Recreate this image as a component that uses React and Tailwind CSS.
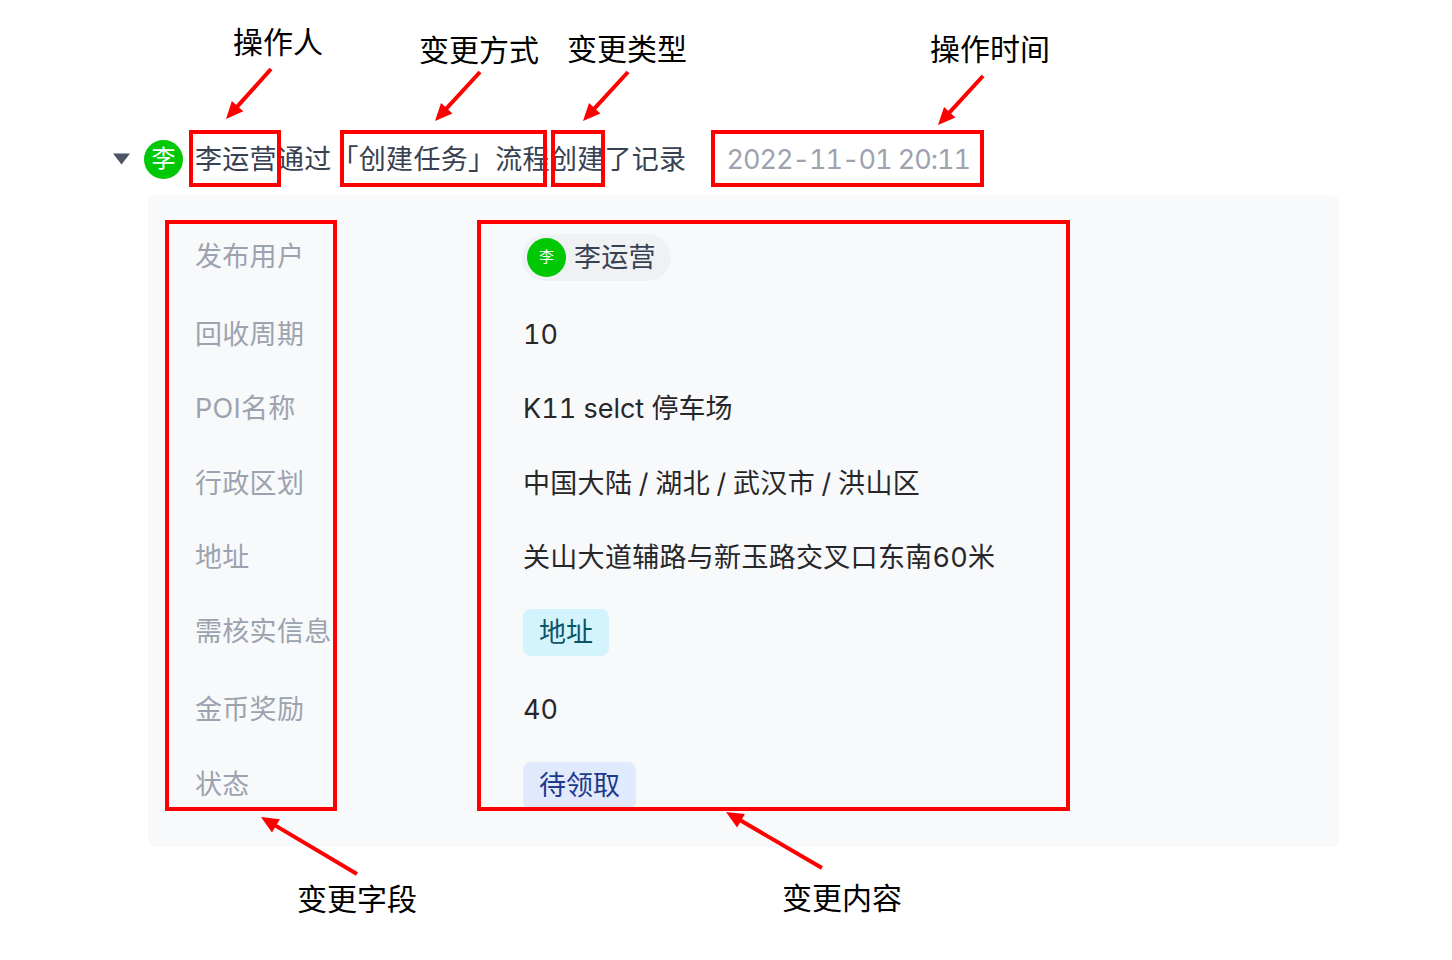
import React from 'react';

const body = "font-['Inter','Noto_Sans_CJK_SC',sans-serif]";
const cjk = "font-['Noto_Sans_CJK_SC',sans-serif]";

const Avatar = ({ small }) => (
  <div className={`flex h-[39px] w-[39px] shrink-0 items-center justify-center rounded-full bg-[#00c805] tracking-normal text-white ${small ? 'text-[15px]' : 'text-[24px]'}`}>
    李
  </div>
);

const Tag = ({ className, children }) => (
  <span className={`flex h-[47px] items-center rounded-lg px-4 pt-[2px] tracking-normal ${className}`}>{children}</span>
);

const Row = ({ label, children, className = 'h-[41px]' }) => (
  <div className={`flex items-center ${className}`}>
    <div className="w-[328px] shrink-0 whitespace-nowrap text-[#9ca3af]">{label}</div>
    <div className="whitespace-nowrap text-[#27272a]">{children}</div>
  </div>
);

const Arrow = ({ x1, y1, x2, y2 }) => {
  const a = Math.atan2(y2 - y1, x2 - x1);
  const len = 19;
  const spread = 0.42;
  const p1 = [x2 - len * Math.cos(a - spread), y2 - len * Math.sin(a - spread)];
  const p2 = [x2 - len * Math.cos(a + spread), y2 - len * Math.sin(a + spread)];
  const bx = x2 - 12 * Math.cos(a);
  const by = y2 - 12 * Math.sin(a);
  return (
    <g>
      <line x1={x1} y1={y1} x2={bx} y2={by} stroke="#ff0000" strokeWidth="4" />
      <polygon points={`${x2},${y2} ${p1[0]},${p1[1]} ${p2[0]},${p2[1]}`} fill="#ff0000" />
    </g>
  );
};

const Note = ({ className, children }) => (
  <div className={`absolute whitespace-nowrap text-[30px] leading-[40px] tracking-normal text-black ${cjk} ${className}`}>{children}</div>
);

const Box = ({ className }) => (
  <div className={`absolute border-[4px] border-[#ff0000] ${className}`} />
);

export default function App() {
  return (
    <div className={`relative h-[960px] w-[1452px] overflow-hidden bg-white pl-[113px] pt-[139px] text-[27px] tracking-[0.3px] tabular-nums ${body}`}>
      {/* record header */}
      <div className="flex h-[40px] items-center">
        <svg width="17" height="12" viewBox="0 0 17 12" className="shrink-0">
          <path d="M0 0.5 H17 L8.5 11.5 Z" fill="#4b5563" />
        </svg>
        <div className="ml-[14px]"><Avatar /></div>
        <div className="ml-[12px] whitespace-nowrap pt-[2px] text-[#374151]">李运营通过「创建任务」流程创建了记录</div>
        <div className="ml-[40px] whitespace-nowrap pt-[2px] tracking-[-1px] text-[#9ca3af]">2022-11-01 20:11</div>
      </div>

      {/* detail panel */}
      <div className="ml-[35px] mt-[16px] flex h-[652px] w-[1191px] flex-col gap-[33px] rounded-lg bg-[#f8f9fb] pl-[47px] pt-[39px]">
        <Row label="发布用户" className="mb-[0.5px] h-[47px]">
          <div className="-ml-[1px] flex h-[47px] items-center rounded-full bg-[#f0f1f3] pl-[5px] pr-[15px]">
            <Avatar small />
            <span className="ml-[8px] pt-[2px] text-[#374151]">李运营</span>
          </div>
        </Row>
        <Row label="回收周期"><span className="tracking-normal">10</span></Row>
        <Row label="POI名称"><span className="tracking-normal">K11 selct 停车场</span></Row>
        <Row label="行政区划" className="mt-[1px] h-[41px]"><span className="[word-spacing:-1px]">中国大陆 / 湖北 / 武汉市 / 洪山区</span></Row>
        <Row label="地址">关山大道辅路与新玉路交叉口东南60米</Row>
        <Row label="需核实信息" className="-mt-[2.5px] h-[47px]">
          <Tag className="bg-[#d3f3fd] text-[#0b5566]">地址</Tag>
        </Row>
        <Row label="金币奖励" className="mt-[0.5px] h-[41px]"><span className="tracking-normal">40</span></Row>
        <Row label="状态" className="-mt-[1.5px] h-[47px]">
          <Tag className="bg-[#e0eafc] text-[#1e3a8a]">待领取</Tag>
        </Row>
      </div>

      {/* annotation overlay */}
      <Box className="left-[189px] top-[130px] h-[57px] w-[92px]" />
      <Box className="left-[340px] top-[130px] h-[57px] w-[207px]" />
      <Box className="left-[551px] top-[130px] h-[57px] w-[54px]" />
      <Box className="left-[711px] top-[130px] h-[57px] w-[273px]" />
      <Box className="left-[165px] top-[220px] h-[591px] w-[172px]" />
      <Box className="left-[477px] top-[220px] h-[591px] w-[593px]" />

      <svg width="1452" height="960" viewBox="0 0 1452 960" className="pointer-events-none absolute left-0 top-0">
        <Arrow x1={271} y1={69} x2={226} y2={119} />
        <Arrow x1={480} y1={72} x2={435} y2={121} />
        <Arrow x1={628} y1={72} x2={583} y2={121} />
        <Arrow x1={983} y1={76} x2={938} y2={125} />
        <Arrow x1={357} y1={874} x2={261} y2={817} />
        <Arrow x1={822} y1={868} x2={726} y2={812} />
      </svg>

      <Note className="left-[233px] top-[20px]">操作人</Note>
      <Note className="left-[419px] top-[28px]">变更方式</Note>
      <Note className="left-[567px] top-[27px]">变更类型</Note>
      <Note className="left-[930px] top-[27px]">操作时间</Note>
      <Note className="left-[297px] top-[877px]">变更字段</Note>
      <Note className="left-[782px] top-[876px]">变更内容</Note>
    </div>
  );
}
